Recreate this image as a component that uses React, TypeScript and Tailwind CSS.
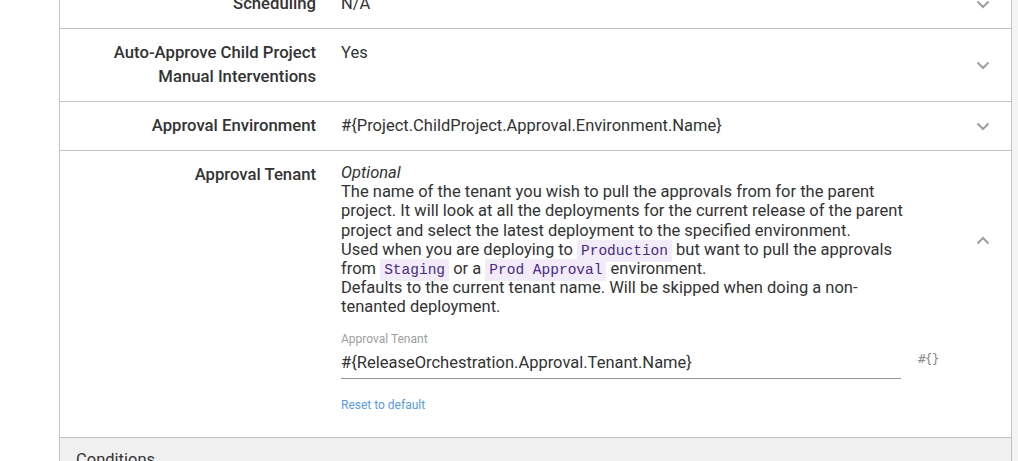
import React from 'react';

const ChevronDown = () => (
  <svg width="14" height="9" viewBox="0 0 14 9" fill="none">
    <path d="M1.5 1.5L7 7L12.5 1.5" stroke="#9e9e9e" strokeWidth="2" />
  </svg>
);

const ChevronUp = () => (
  <svg width="14" height="9" viewBox="0 0 14 9" fill="none">
    <path d="M1.5 7.5L7 2L12.5 7.5" stroke="#9e9e9e" strokeWidth="2" />
  </svg>
);

const Code = ({ children }: { children: React.ReactNode }) => (
  <code className="bg-[#f2ecf9] text-[#4a2a82] px-[4px] py-[3px] text-[14.5px] leading-[14px] font-['Liberation_Mono','DejaVu_Sans_Mono',monospace]">
    {children}
  </code>
);

interface RowProps {
  label: React.ReactNode;
  value: React.ReactNode;
}

function SummaryRow({ label, value }: RowProps) {
  return (
    <div className="flex border-b border-[#c2c2c2]">
      <div className="w-[256px] shrink-0 py-[12px] text-right text-[16.7px] leading-[24px] font-medium text-[#333]">{label}</div>
      <div className="ml-[25px] flex-1 py-[12px] text-[16.5px] leading-[24px] text-[#333]">{value}</div>
      <div className="w-[56px] shrink-0 flex items-center justify-center">
        <ChevronDown />
      </div>
    </div>
  );
}

export default function App() {
  return (
    <div className="w-[1018px] h-[461px] overflow-hidden bg-white flex font-['Roboto','Liberation_Sans',sans-serif]">
      <div className="w-[59px] shrink-0 bg-white" />
      <div className="w-[953px] shrink-0 border-x border-[#c2c2c2] -mt-[20px] flex flex-col">
        <SummaryRow label="Scheduling" value="N/A" />
        <SummaryRow
          label={<>Auto-Approve Child Project<br />Manual Interventions</>}
          value="Yes"
        />
        <SummaryRow label="Approval Environment" value="#{Project.ChildProject.Approval.Environment.Name}" />

        <div className="flex border-b border-[#c2c2c2]">
          <div className="w-[256px] shrink-0 py-[12px] text-right text-[16.7px] leading-[24px] font-medium text-[#333]">
            Approval Tenant
          </div>
          <div className="ml-[25px] flex-1 pt-[12px] pb-[25px] text-[#333]">
            <div className="max-w-[572px] text-[16.5px] leading-[19.2px]">
              <em>Optional</em>
              <br />
              The name of the tenant you wish to pull the approvals from for the parent project. It will look at all the deployments for the current release of the parent project and select the latest deployment to the specified environment.
              <br />
              Used when you are deploying to <Code>Production</Code> but want to pull the approvals from <Code>Staging</Code> or a <Code>Prod Approval</Code> environment.
              <br />
              Defaults to the current tenant name. Will be skipped when doing a non-tenanted deployment.
            </div>
            <div className="mt-[15px] text-[12px] leading-[14px] text-[#9e9e9e]">Approval Tenant</div>
            <div className="flex items-center">
              <div className="w-[560px] h-[33px] flex items-end pb-[6px] border-b border-[#949494] text-[16.5px] leading-[19px]">
                #{'{'}ReleaseOrchestration.Approval.Tenant.Name{'}'}
              </div>
              <div className="ml-[17px] -mt-[6px] text-[13px] text-[#8a8a8a] font-['DejaVu_Sans_Mono',monospace] tracking-[-1px]">
                #{'{}'}
              </div>
            </div>
            <div className="mt-[19px] text-[12px] leading-[14px] text-[#5b9ae0]">Reset to default</div>
          </div>
          <div className="w-[56px] shrink-0 flex justify-center pt-[85px]">
            <div className="h-[9px]">
              <ChevronUp />
            </div>
          </div>
        </div>

        <div className="flex-1 bg-[#f0f0f0] pl-[16px] pt-[10px] text-[16.5px] leading-[24px] text-[#333]">Conditions</div>
      </div>
      <div className="flex-1 bg-[#f4f4f4]" />
    </div>
  );
}
